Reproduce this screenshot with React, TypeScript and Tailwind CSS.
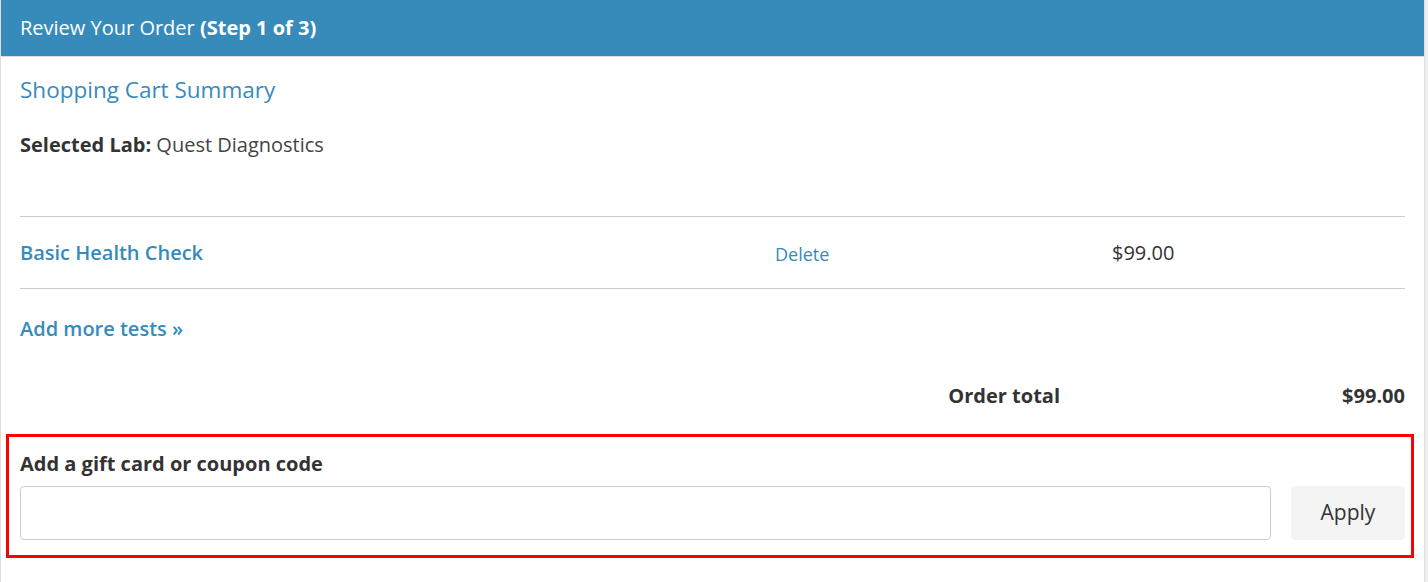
export default function App() {
  return (
    <div className="min-h-screen bg-[#eeeeee] font-['Open_Sans',sans-serif] text-[#333333]">
      <div className="w-[1425px] min-h-[582px] bg-white border-x border-[#dddddd]">
        {/* Header */}
        <div className="h-[57px] bg-[#368bbb] border-b border-[#dddddd] px-[19px] flex items-center text-white text-[20px]">
          <span>
            Review Your Order <span className="font-bold">(Step 1 of 3)</span>
          </span>
        </div>

        <div className="px-[19px]">
          <h2 className="text-[22.5px] text-[#368bbb] leading-[30px] mt-[18px]">Shopping Cart Summary</h2>
          <p className="text-[20px] leading-[28px] mt-[26px]">
            <span className="font-bold">Selected Lab:</span> <span className="text-[#444444]">Quest Diagnostics</span>
          </p>

          {/* Cart rows */}
          <div className="mt-[57px] border-t border-[#cccccc]" />
          <div className="h-[71px] grid grid-cols-[755px_337px_1fr] items-center">
            <a className="text-[20px] font-semibold text-[#368bbb]">Basic Health Check</a>
            <a className="text-[18px] text-[#368bbb] mt-[4px]">Delete</a>
            <span className="text-[20px]">$99.00</span>
          </div>
          <div className="border-t border-[#cccccc]" />

          <a className="block mt-[26px] text-[20px] font-semibold text-[#368bbb] leading-[28px]">Add more tests »</a>

          <div className="flex justify-end items-center mt-[39px] text-[20px] font-bold leading-[28px]">
            <span>Order total</span>
            <span className="w-[345px] text-right">$99.00</span>
          </div>
        </div>

        {/* Coupon box */}
        <div className="ml-[5px] mt-[24px] w-[1408px] border-[3px] border-[#ff0000] pl-[11px] pr-[6px] pt-[13px] pb-[15px]">
          <label className="block text-[20px] font-bold leading-[28px]">Add a gift card or coupon code</label>
          <div className="flex items-center gap-[20px] mt-[8px]">
            <input className="flex-1 h-[54px] border border-[#cccccc] rounded-[4px] px-3 outline-none" />
            <button className="w-[114px] h-[54px] bg-[#f4f4f4] rounded-[4px] text-[21px] text-[#333333]">Apply</button>
          </div>
        </div>
      </div>
    </div>
  );
}
